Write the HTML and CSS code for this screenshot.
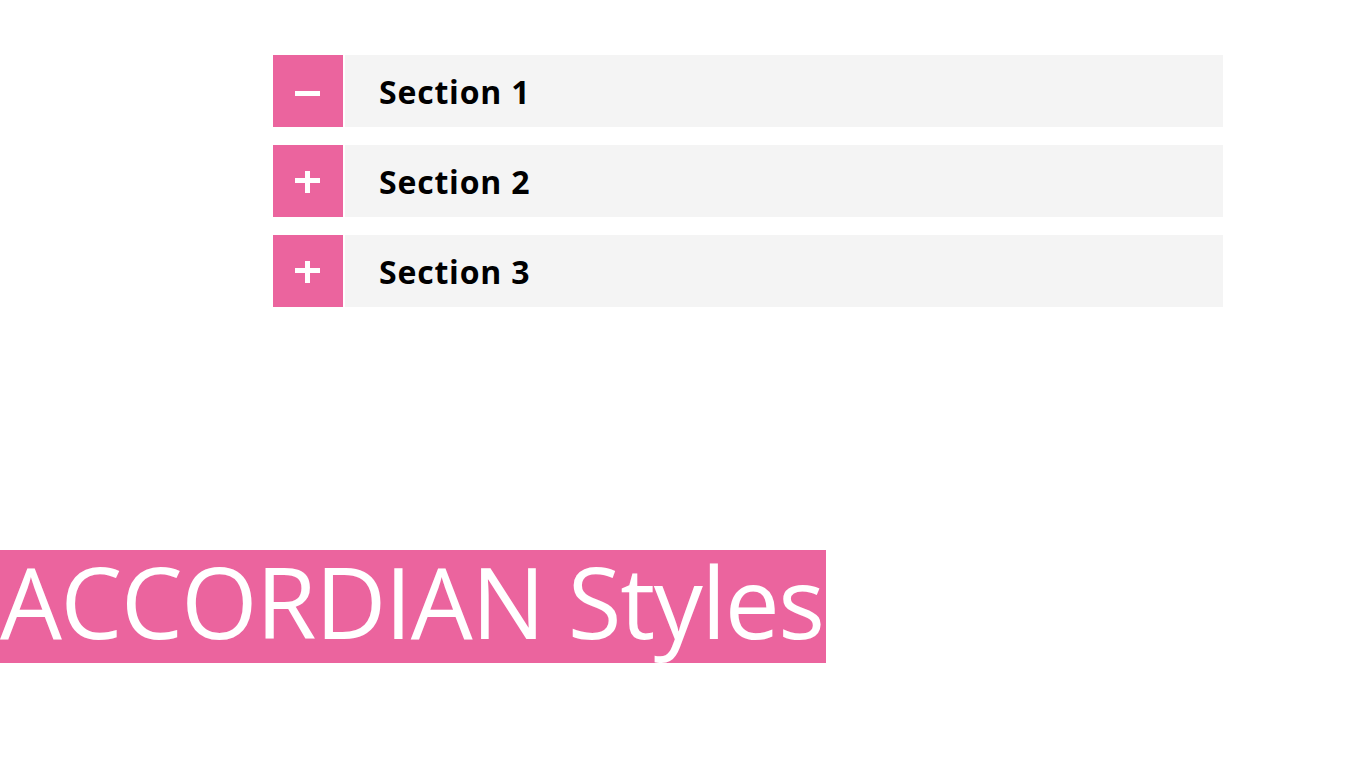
FILE: index.html
```html
<!DOCTYPE html>
<html lang="en">
<head>
<meta charset="utf-8">
<title>Accordion Styles</title>
<link rel="stylesheet" href="styles.css">
</head>
<body>
<main class="page">
  <section class="accordion">
    <div class="acc-item">
      <div class="acc-icon">
        <svg width="26" height="26" viewBox="0 0 26 26"><rect x="0" y="13" width="25" height="5" fill="#fff"/></svg>
      </div>
      <div class="acc-title">Section 1</div>
    </div>
    <div class="acc-item">
      <div class="acc-icon">
        <svg width="26" height="26" viewBox="0 0 26 26"><rect x="0" y="10" width="25" height="5" fill="#fff"/><rect x="10" y="3" width="5" height="22" fill="#fff"/></svg>
      </div>
      <div class="acc-title">Section 2</div>
    </div>
    <div class="acc-item">
      <div class="acc-icon">
        <svg width="26" height="26" viewBox="0 0 26 26"><rect x="0" y="10" width="25" height="5" fill="#fff"/><rect x="10" y="3" width="5" height="22" fill="#fff"/></svg>
      </div>
      <div class="acc-title">Section 3</div>
    </div>
  </section>
  <div class="banner">ACCORDIAN Styles</div>
</main>
</body>
</html>
```
FILE: styles.css
```css
html, body {
  margin: 0;
  padding: 0;
  background: #ffffff;
}
.page {
  width: 1366px;
  height: 768px;
  padding-top: 55px;
  box-sizing: border-box;
  font-family: "Open Sans", "Liberation Sans", sans-serif;
}
.accordion {
  margin-left: 273px;
  width: 950px;
  display: flex;
  flex-direction: column;
  gap: 18px;
}
.acc-item {
  display: flex;
  height: 72px;
  gap: 2px;
}
.acc-icon {
  width: 70px;
  flex: 0 0 70px;
  background: #eb649e;
  display: flex;
  align-items: center;
  justify-content: center;
}
.acc-icon svg {
  display: block;
}
.acc-title {
  flex: 1;
  background: #f4f4f4;
  display: flex;
  align-items: center;
  padding-left: 34px;
  font-weight: 700;
  font-size: 32px;
  letter-spacing: 0.8px;
  color: #000;
}
.banner {
  margin-top: 243px;
  width: 826px;
  height: 113px;
  box-sizing: border-box;
  background: #eb649e;
  color: #fff;
  font-size: 98px;
  letter-spacing: -1.4px;
  line-height: 103px;
  padding-bottom: 10px;
  white-space: nowrap;
}
```
